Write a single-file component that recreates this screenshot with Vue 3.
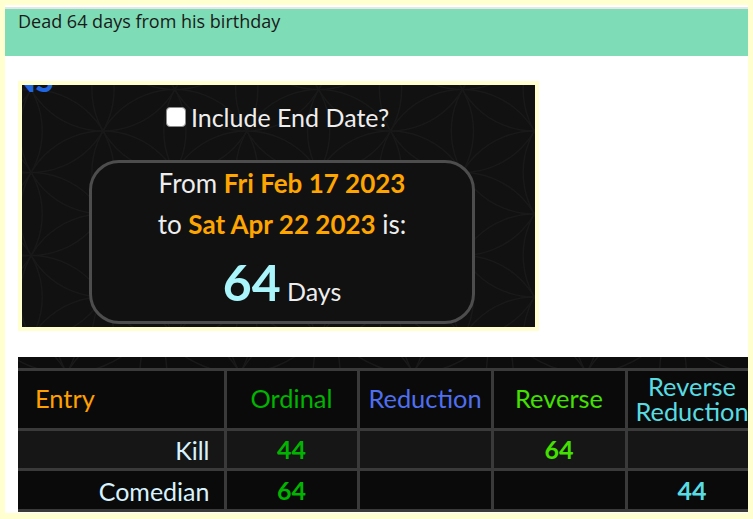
<script setup>
const rows = [
  { name: 'Kill', cells: [{ v: '44', c: 'ord' }, { v: '' }, { v: '64', c: 'rev' }, { v: '' }] },
  { name: 'Comedian', cells: [{ v: '64', c: 'ord' }, { v: '' }, { v: '' }, { v: '44', c: 'rr' }] },
]

function lattice(cx, cy, r, w, h) {
  const dx = r * Math.sqrt(3)
  const out = []
  for (let i = -4; i <= 8; i++) {
    for (let j = -5; j <= 8; j++) {
      out.push({ x: cx + i * dx, y: cy + j * r })
      out.push({ x: cx + (i + 0.5) * dx, y: cy + (j + 0.5) * r })
    }
  }
  return out.filter(p => p.x > -r && p.x < w + r && p.y > -r && p.y < h + r)
}

const calcNodes = lattice(81, 46, 83, 513, 242)
const bandNodes = lattice(222, 16, 100, 730, 11)
</script>

<template>
  <div class="page">
    <div class="note">Dead 64 days from his birthday</div>
    <section class="calc">
      <svg class="flower" width="513" height="242" aria-hidden="true">
        <circle v-for="(n, i) in calcNodes" :key="i" :cx="n.x" :cy="n.y" r="83" fill="none" stroke="#191919" stroke-width="1.5" />
      </svg>
      <span class="cut">NS</span>
      <label class="include"><input type="checkbox" class="chk" /><span>Include End Date?</span></label>
      <div class="result">
        <p class="line">From <b>Fri Feb 17 2023</b></p>
        <p class="line">to <b>Sat Apr 22 2023</b> is:</p>
        <p class="total"><strong>64</strong> <span>Days</span></p>
      </div>
    </section>
    <div class="table-wrap">
      <svg class="band" width="730" height="11" aria-hidden="true">
        <circle v-for="(n, i) in bandNodes" :key="i" :cx="n.x" :cy="n.y" r="100" fill="none" stroke="#191919" stroke-width="1.5" />
      </svg>
      <table>
        <colgroup>
          <col class="c0" /><col class="c1" /><col class="c2" /><col class="c3" /><col class="c4" />
        </colgroup>
        <thead>
          <tr>
            <th class="entry">Entry</th>
            <th class="ord">Ordinal</th>
            <th class="red">Reduction</th>
            <th class="rev">Reverse</th>
            <th class="rr">Reverse Reduction</th>
          </tr>
        </thead>
        <tbody>
          <tr v-for="r in rows" :key="r.name">
            <td class="name">{{ r.name }}</td>
            <td v-for="(c, i) in r.cells" :key="i" class="num" :class="c.c">{{ c.v }}</td>
          </tr>
        </tbody>
      </table>
    </div>
  </div>
</template>

<style>
html, body { margin: 0; background: #ffffd0; overflow: hidden; }
</style>

<style scoped>
.page {
  box-sizing: border-box;
  width: 743px;
  height: 508px;
  margin: 5px 0 0 5px;
  padding-top: 2px;
  background: #fff;
  overflow: hidden;
}
.note {
  box-sizing: border-box;
  height: 49px;
  border-top: 2px solid #e6e6e6;
  padding: 0 13px;
  background: #7eddb6;
  color: #1a1a1a;
  font: 18px/24px "Open Sans", sans-serif;
}
.calc {
  position: relative;
  box-sizing: border-box;
  width: 521px;
  height: 250px;
  margin: 25px 0 0 13px;
  border: 4px solid #ffffd0;
  background: #111;
  overflow: hidden;
  color: #eee;
  font-family: Lato, sans-serif;
  text-align: center;
}
.flower { position: absolute; left: 0; top: 0; }
.cut {
  position: absolute;
  left: -11px;
  top: -20px;
  color: #1f66e0;
  font: 900 32px/30px Lato, sans-serif;
}
.include {
  position: relative;
  display: flex;
  align-items: center;
  justify-content: center;
  gap: 5px;
  height: 26px;
  margin: 19px 0 0 -2px;
  font-size: 25px;
  line-height: 26px;
}
.chk {
  box-sizing: border-box;
  width: 20px;
  height: 20px;
  margin: 0;
  appearance: none;
  background: #fff;
  border: 1.5px solid #8a8a8a;
  border-radius: 4px;
}
.result {
  position: relative;
  box-sizing: border-box;
  width: 386px;
  height: 164px;
  margin: 30px 0 0 67px;
  border: 3px solid #4d4d4d;
  border-radius: 30px;
  background: #111;
}
.line {
  margin: 0;
  height: 41px;
  font-size: 26px;
  line-height: 41px;
}
.line b { color: #ffa500; font-weight: 700; }
.total {
  margin: 6px 0 0;
  line-height: 62px;
  font-size: 25px;
}
.total strong {
  color: #a9f5fb;
  font-size: 50px;
  font-weight: 700;
}
.table-wrap {
  position: relative;
  box-sizing: border-box;
  width: 730px;
  height: 155px;
  margin: 26px 0 0 13px;
  padding-top: 11px;
  background: #0d0d0d;
  overflow: hidden;
}
.band { position: absolute; left: 0; top: 0; }
table {
  position: relative;
  table-layout: fixed;
  width: 740px;
  border-collapse: collapse;
  font-family: Lato, sans-serif;
  font-size: 25px;
  line-height: 25px;
  color: #d8f3ff;
}
.c0 { width: 207px; }
.c1 { width: 133px; }
.c2 { width: 134px; }
.c3 { width: 134px; }
.c4 { width: 132px; }
thead tr { height: 60px; }
tbody tr:nth-child(1) { height: 40px; background: #161616; }
tbody tr:nth-child(2) { height: 41px; background: #0a0a0a; }
th, td {
  border: 3px solid #3a3a3a;
  padding: 0;
  text-align: center;
  font-weight: 400;
}
th {
  padding-bottom: 2px;
  background: #0a0a0a;
  font-size: 25.4px;
}
th:first-child, td:first-child { border-left: 0; }
th.entry { color: #ffa000; text-align: left; padding-left: 17px; }
.ord { color: #00b400; }
.red { color: #4f6ff0; }
.rev { color: #44e000; }
.rr { color: #58dce2; line-height: 25px; }
td.name { text-align: right; padding: 2px 14px 0 0; }
.num { font-weight: 700; }
</style>
